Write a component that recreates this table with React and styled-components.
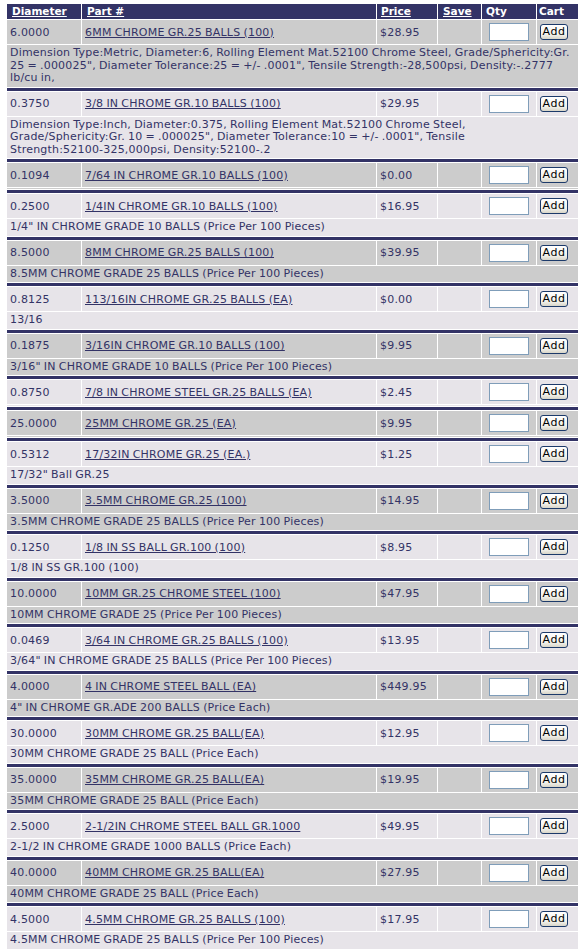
import React from 'react'
import styled, { createGlobalStyle } from 'styled-components'

const GlobalStyle = createGlobalStyle`
    body {
        margin: 0;
        background: #FFF;
        font-family: "DejaVu Sans", Verdana, sans-serif;
        font-size: 11px;
        color: #333366;
    }
`

const Page = styled.div`
    padding: 3px 2px 0 6px;
`

const Table = styled.table`
    width: 573px;
    table-layout: fixed;
    border-collapse: separate;
    border-spacing: 1px;
    background: #FFF;
`

const HeadCell = styled.th`
    box-sizing: border-box;
    background-color: #333366;
    color: #FFF;
    font-size: 10.5px;
    font-weight: bold;
    text-align: left;
    line-height: 13px;
    padding: 1px 3px 1px ${props => props.$pad || 4}px;
    white-space: nowrap;

    a {
        color: #FFF;
        text-decoration: underline;
    }
`

const Cell = styled.td`
    box-sizing: border-box;
    background-color: ${props => props.$shade ? '#CCCCCC' : '#E7E4E9'};
    padding: 3px;
    line-height: 13px;
    letter-spacing: 0.2px;
    word-spacing: -0.6px;
    vertical-align: middle;
    text-align: ${props => props.$center ? 'center' : 'left'};
    white-space: nowrap;
    overflow: hidden;

    a {
        color: #333366;
        text-decoration: underline;
    }
`

const DescCell = styled.td`
    box-sizing: border-box;
    background-color: ${props => props.$shade ? '#CCCCCC' : '#E7E4E9'};
    padding: ${props => props.$empty ? '0 3px' : '2px 3px'};
    height: ${props => props.$empty ? '1px' : 'auto'};
    font-size: ${props => props.$empty ? '0' : '11px'};
    line-height: ${props => props.$empty ? '0' : '12.5px'};
    letter-spacing: 0.2px;
    word-spacing: -0.6px;
`

// old browsers keep "52100-325" together, so do we
const NoBreak = styled.span`
    white-space: nowrap;
`

const Divider = styled.td`
    background-color: #333366;
    height: 3px;
    padding: 0;
    font-size: 0;
    line-height: 0;
`

const QtyInput = styled.input`
    box-sizing: border-box;
    width: 40px;
    height: 18px;
    margin: 0;
    border: 1px solid #7F9DB9;
    background: #FFF;
    vertical-align: middle;
    font-family: "DejaVu Sans", Verdana, sans-serif;
    font-size: 11px;
`

const AddButton = styled.button`
    box-sizing: border-box;
    width: 28px;
    height: 16px;
    margin: 0;
    padding: 0;
    border: 1px solid #1C3A6A;
    border-radius: 3px;
    background: linear-gradient(#FFFFFF, #F1F0EA 70%, #D8D5C8);
    color: #000;
    font-family: "DejaVu Sans", Verdana, sans-serif;
    font-size: 11px;
    line-height: 12px;
    letter-spacing: 0.5px;
    vertical-align: middle;
    cursor: pointer;
`

const DIMENSION_1 = 'Dimension Type:Metric, Diameter:6, Rolling Element Mat.52100 Chrome Steel, Grade/Sphericity:Gr. 25 = .000025", Diameter Tolerance:25 = +/- .0001", Tensile Strength:-28,500psi, Density:-.2777 lb/cu in,'
const DIMENSION_2 = 'Dimension Type:Inch, Diameter:0.375, Rolling Element Mat.52100 Chrome Steel, Grade/Sphericity:Gr. 10 = .000025", Diameter Tolerance:10 = +/- .0001", Tensile Strength:52100-325,000psi, Density:52100-.2'

const balls = [
    ['6.0000', '6MM CHROME GR.25 BALLS (100)', '$28.95', DIMENSION_1],
    ['0.3750', '3/8 IN CHROME GR.10 BALLS (100)', '$29.95', DIMENSION_2],
    ['0.1094', '7/64 IN CHROME GR.10 BALLS (100)', '$0.00', ''],
    ['0.2500', '1/4IN CHROME GR.10 BALLS (100)', '$16.95', '1/4" IN CHROME GRADE 10 BALLS (Price Per 100 Pieces)'],
    ['8.5000', '8MM CHROME GR.25 BALLS (100)', '$39.95', '8.5MM CHROME GRADE 25 BALLS (Price Per 100 Pieces)'],
    ['0.8125', '113/16IN CHROME GR.25 BALLS (EA)', '$0.00', '13/16'],
    ['0.1875', '3/16IN CHROME GR.10 BALLS (100)', '$9.95', '3/16" IN CHROME GRADE 10 BALLS (Price Per 100 Pieces)'],
    ['0.8750', '7/8 IN CHROME STEEL GR.25 BALLS (EA)', '$2.45', ''],
    ['25.0000', '25MM CHROME GR.25 (EA)', '$9.95', ''],
    ['0.5312', '17/32IN CHROME GR.25 (EA.)', '$1.25', '17/32" Ball GR.25'],
    ['3.5000', '3.5MM CHROME GR.25 (100)', '$14.95', '3.5MM CHROME GRADE 25 BALLS (Price Per 100 Pieces)'],
    ['0.1250', '1/8 IN SS BALL GR.100 (100)', '$8.95', '1/8 IN SS GR.100 (100)'],
    ['10.0000', '10MM GR.25 CHROME STEEL (100)', '$47.95', '10MM CHROME GRADE 25 (Price Per 100 Pieces)'],
    ['0.0469', '3/64 IN CHROME GR.25 BALLS (100)', '$13.95', '3/64" IN CHROME GRADE 25 BALLS (Price Per 100 Pieces)'],
    ['4.0000', '4 IN CHROME STEEL BALL (EA)', '$449.95', '4" IN CHROME GR.ADE 200 BALLS (Price Each)'],
    ['30.0000', '30MM CHROME GR.25 BALL(EA)', '$12.95', '30MM CHROME GRADE 25 BALL (Price Each)'],
    ['35.0000', '35MM CHROME GR.25 BALL(EA)', '$19.95', '35MM CHROME GRADE 25 BALL (Price Each)'],
    ['2.5000', '2-1/2IN CHROME STEEL BALL GR.1000', '$49.95', '2-1/2 IN CHROME GRADE 1000 BALLS (Price Each)'],
    ['40.0000', '40MM CHROME GR.25 BALL(EA)', '$27.95', '40MM CHROME GRADE 25 BALL (Price Each)'],
    ['4.5000', '4.5MM CHROME GR.25 BALLS (100)', '$17.95', '4.5MM CHROME GRADE 25 BALLS (Price Per 100 Pieces)'],
]

const formatDesc = desc =>
    desc.split(/(\S*\d-\d\S*)/).map((part, i) =>
        i % 2 ? <NoBreak key={i}>{part}</NoBreak> : part
    )

const ProductRows = ({ item, index }) => {
    const [diameter, part, price, desc] = item
    const shade = index % 2 === 0
    return (
        <>
            {index > 0 && (
                <tr><Divider colSpan={6} /></tr>
            )}
            <tr>
                <Cell $shade={shade}>{diameter}</Cell>
                <Cell $shade={shade}><a href="#">{part}</a></Cell>
                <Cell $shade={shade}>{price}</Cell>
                <Cell $shade={shade}></Cell>
                <Cell $shade={shade} $center><QtyInput type="text" /></Cell>
                <Cell $shade={shade}><AddButton>Add</AddButton></Cell>
            </tr>
            <tr>
                <DescCell colSpan={6} $shade={shade} $empty={!desc}>{formatDesc(desc)}</DescCell>
            </tr>
        </>
    )
}

const App = () => (
    <Page>
        <GlobalStyle />
        <Table>
            <colgroup>
                <col style={{ width: 74 }} />
                <col style={{ width: 294 }} />
                <col style={{ width: 60 }} />
                <col style={{ width: 43 }} />
                <col style={{ width: 54 }} />
                <col style={{ width: 41 }} />
            </colgroup>
            <thead>
                <tr>
                    <HeadCell $pad={5}><a href="#">Diameter</a></HeadCell>
                    <HeadCell $pad={5}><a href="#">Part #</a></HeadCell>
                    <HeadCell><a href="#">Price</a></HeadCell>
                    <HeadCell $pad={5}><a href="#">Save</a></HeadCell>
                    <HeadCell>Qty</HeadCell>
                    <HeadCell $pad={2}>Cart</HeadCell>
                </tr>
            </thead>
            <tbody>
                {balls.map((item, i) => (
                    <ProductRows key={item[0] + item[1]} item={item} index={i} />
                ))}
            </tbody>
        </Table>
    </Page>
)

export default App
